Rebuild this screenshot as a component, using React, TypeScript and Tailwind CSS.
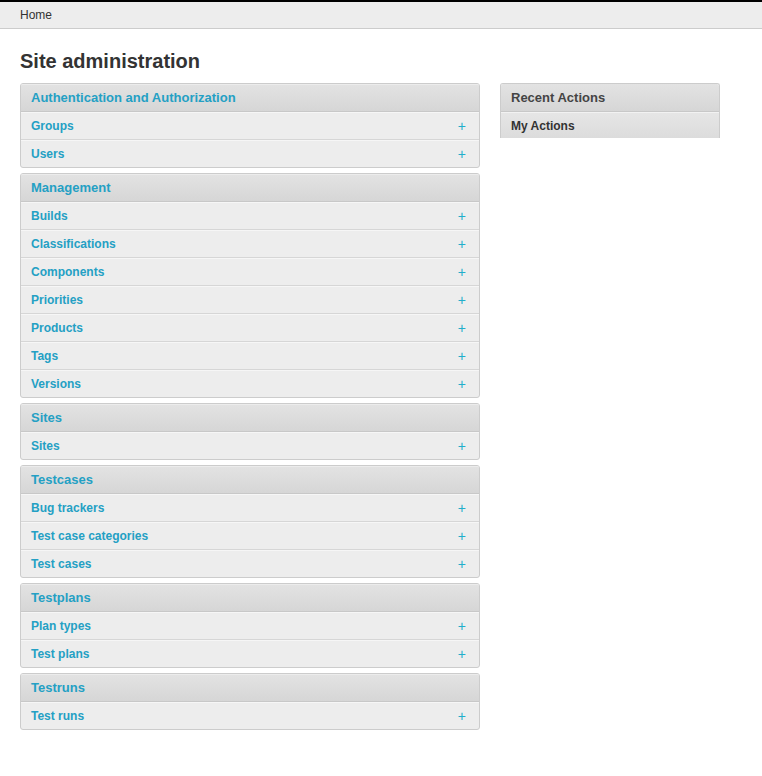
import React from "react";

type Module = { title: string; rows: string[] };

const modules: Module[] = [
	{ title: "Authentication and Authorization", rows: ["Groups", "Users"] },
	{
		title: "Management",
		rows: [
			"Builds",
			"Classifications",
			"Components",
			"Priorities",
			"Products",
			"Tags",
			"Versions",
		],
	},
	{ title: "Sites", rows: ["Sites"] },
	{
		title: "Testcases",
		rows: ["Bug trackers", "Test case categories", "Test cases"],
	},
	{ title: "Testplans", rows: ["Plan types", "Test plans"] },
	{ title: "Testruns", rows: ["Test runs"] },
];

function ModuleBox({ module }: { module: Module }) {
	return (
		<div className="border border-[#cccccc] rounded-[3px] bg-[#ededed] overflow-hidden">
			<div className="h-[28px] flex items-center px-[10px] border-b border-[#c8c8c8] bg-gradient-to-b from-[#e3e3e3] to-[#d6d6d6] shadow-[inset_0_1px_0_#ececec]">
				<span className="text-[13px] font-bold text-[#24a0c4]">
					{module.title}
				</span>
			</div>
			{module.rows.map((row, i) => (
				<div
					key={row}
					className={
						i === 0
							? "h-[27px] flex items-center justify-between pl-[10px] pr-[13px] shadow-[inset_0_1px_0_#f6f6f6]"
							: "h-[28px] flex items-center justify-between pl-[10px] pr-[13px] border-t border-[#d6d6d6] shadow-[inset_0_1px_0_#f6f6f6]"
					}
				>
					<span className="text-[12px] font-bold text-[#24a0c4]">{row}</span>
					<span className="text-[14px] text-[#22aecb] leading-none">+</span>
				</div>
			))}
		</div>
	);
}

export default function App() {
	return (
		<div
			className="min-h-[776px] bg-white text-[#333333]"
			style={{ fontFamily: '"Liberation Sans", Arial, sans-serif' }}
		>
			<div className="h-[29px] bg-[#ededed] border-t-2 border-t-black border-b border-b-[#cccccc] flex items-center px-[20px]">
				<span className="text-[12px] text-[#333333]">Home</span>
			</div>

			<div className="px-[20px]">
				<h1 className="text-[20px] font-bold text-[#333333] mt-[20px] mb-[10px] leading-[24px]">
					Site administration
				</h1>

				<div className="flex gap-[20px] items-start">
					<div className="w-[460px] flex flex-col gap-[5px]">
						{modules.map((m) => (
							<ModuleBox key={m.title} module={m} />
						))}
					</div>

					<div className="w-[220px] border border-b-0 border-[#cccccc] rounded-t-[3px] overflow-hidden">
						<div className="h-[28px] flex items-center px-[10px] border-b border-[#c8c8c8] bg-gradient-to-b from-[#e3e3e3] to-[#d6d6d6]">
							<span className="text-[13px] font-bold text-[#444444]">
								Recent Actions
							</span>
						</div>
						<div className="h-[26px] pt-[2px] flex items-center px-[10px] bg-gradient-to-b from-[#e6e6e6] to-[#dcdcdc] shadow-[inset_0_1px_0_#f2f2f2]">
							<span className="text-[12px] font-bold text-[#333333]">
								My Actions
							</span>
						</div>
					</div>
				</div>
			</div>
		</div>
	);
}
